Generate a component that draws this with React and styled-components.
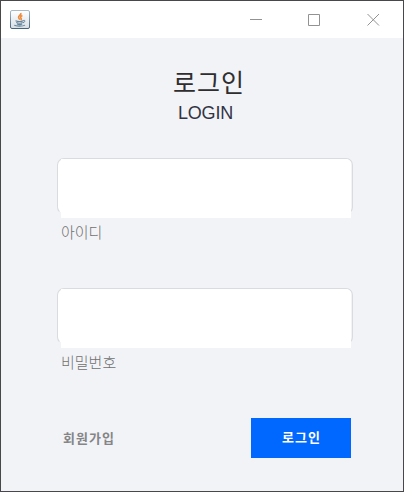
import React from "react";
import styled, { createGlobalStyle } from "styled-components";

const GlobalStyle = createGlobalStyle`
  * { box-sizing: border-box; }
  body { margin: 0; background: #f2f3f7; }
`;

const korean = `"Noto Sans CJK KR", sans-serif`;

const Window = styled.main`
  width: 404px;
  height: 492px;
  border: 1px solid #48484a;
  background: #f2f3f7;
  font-family: ${korean};
  overflow: hidden;
`;

const TitleBar = styled.header`
  height: 37px;
  padding: 0 0 0 9px;
  display: flex;
  align-items: center;
  justify-content: space-between;
  background: #fff;
`;

const Controls = styled.div`
  display: flex;
`;

const Control = styled.button`
  width: ${(p) => p.$width}px;
  height: 36px;
  padding: 0;
  border: 0;
  background: none;
  display: flex;
  align-items: center;
  justify-content: center;
`;

const Content = styled.form`
  padding: 26px 52px 0 56px;
  display: flex;
  flex-direction: column;
`;

const Title = styled.h1`
  margin: 0 0 0 116px;
  height: 37px;
  font-size: 25px;
  line-height: 34px;
  font-weight: 400;
  letter-spacing: 1px;
  color: #2e2e30;
  white-space: nowrap;
`;

const Subtitle = styled.h2`
  margin: 0 0 0 121px;
  height: 24px;
  font: 400 18px/25px "Liberation Sans", sans-serif;
  letter-spacing: -0.2px;
  color: #333344;
`;

const Field = styled.label`
  display: block;
  height: 86px;
  margin-top: ${(p) => p.$gap}px;
`;

const InputShell = styled.span`
  display: block;
  width: 296px;
  height: 56px;
  padding-left: 3px;
  border: 1px solid #d9dbe0;
  border-bottom-color: transparent;
  border-radius: 7px;
  background: linear-gradient(to right, #fff 293px, #f2f3f7 293px);
  background-clip: padding-box;
`;

const Input = styled.input`
  display: block;
  width: 290px;
  height: 59px;
  padding: 0 8px;
  border: 0;
  border-top-right-radius: 5px;
  outline: 0;
  background: #fff;
  font: 16px ${korean};
`;

const Caption = styled.span`
  display: block;
  margin: 7px 0 0 4px;
  font-size: 15px;
  line-height: 22px;
  font-weight: 300;
  color: #707070;
`;

const Actions = styled.div`
  margin-top: 44px;
  display: flex;
  align-items: center;
  justify-content: space-between;
  padding: 0 0 0 6px;
`;

const JoinLink = styled.button`
  padding: 0;
  border: 0;
  background: none;
  color: #858587;
  font: 700 13px/20px ${korean};
  letter-spacing: 1px;
`;

const LoginButton = styled.button`
  width: 100px;
  height: 40px;
  padding: 0 0 3px 1px;
  border: 0;
  background: #0068ff;
  color: #fff;
  font: 700 13px/20px ${korean};
  letter-spacing: 1px;
`;

function JavaIcon() {
  return (
    <svg width="20" height="20" viewBox="0 0 20 20" fill="none">
      <defs>
        <linearGradient id="tile" x2="0" y2="1">
          <stop stopColor="#fff" />
          <stop offset="1" stopColor="#d7dee4" />
        </linearGradient>
        <linearGradient id="edge" x2="0" y2="1">
          <stop stopColor="#a9bac6" />
          <stop offset="1" stopColor="#46657c" />
        </linearGradient>
      </defs>
      <rect x=".5" y=".5" width="19" height="18" rx="1.5" fill="url(#tile)" stroke="url(#edge)" />
      <path d="M10.8 3c1 2-2.8 2.7-2.2 4.6.2.8 1.2 1.3.8 2.2M12.4 5.5c-2.5 1.1-1.9 2.2-1.3 2.9.5.7.2 1.2-.4 1.6" stroke="#ec8a3b" strokeWidth="1.6" />
      <path d="M5.5 10.7c2 .8 6 .8 7.8 0M6.2 12.5c1.8.7 5 .7 6.5 0M7 14c1.5.6 4 .6 5.2 0M4.2 15.2c1.5 1.3 9 1.2 10.8-.1" stroke="#64859d" strokeWidth="1.1" />
      <path d="M13.2 10.5c2-.9 2.6 1.3-.2 2.3" stroke="#64859d" />
    </svg>
  );
}

const WindowGlyph = ({ d }) => (
  <svg width="13" height="13" viewBox="0 0 13 13" fill="none" stroke="#929292">
    <path d={d} />
  </svg>
);

export default function App() {
  return (
    <>
      <GlobalStyle />
      <Window>
        <TitleBar>
          <JavaIcon />
          <Controls>
            <Control type="button" aria-label="Minimize" $width={59}><WindowGlyph d="M0 6.5h12" /></Control>
            <Control type="button" aria-label="Maximize" $width={57}><WindowGlyph d="M.5 1.5h11v11h-11z" /></Control>
            <Control type="button" aria-label="Close" $width={60}><WindowGlyph d="M.5 1l11.5 11.5M12 1L.5 12.5" /></Control>
          </Controls>
        </TitleBar>
        <Content>
          <Title>로그인</Title>
          <Subtitle>LOGIN</Subtitle>
          <Field $gap={33}>
            <InputShell><Input type="text" /></InputShell>
            <Caption>아이디</Caption>
          </Field>
          <Field $gap={44}>
            <InputShell><Input type="password" /></InputShell>
            <Caption>비밀번호</Caption>
          </Field>
          <Actions>
            <JoinLink type="button">회원가입</JoinLink>
            <LoginButton type="submit">로그인</LoginButton>
          </Actions>
        </Content>
      </Window>
    </>
  );
}
